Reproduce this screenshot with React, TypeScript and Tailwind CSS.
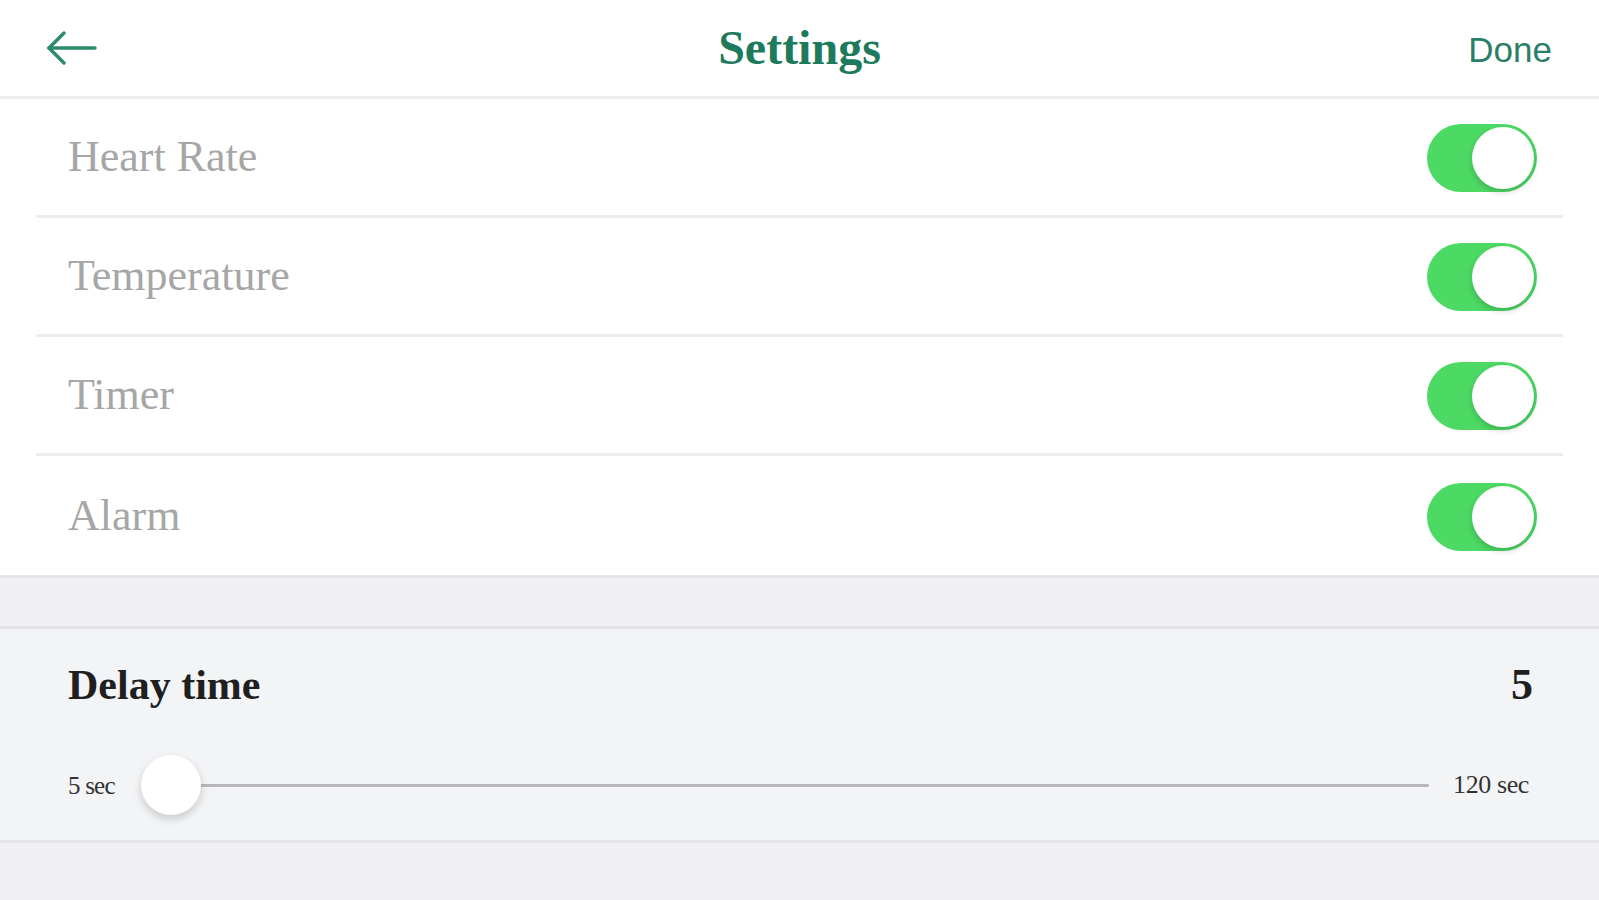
import { useState } from "react"

const serif = { fontFamily: '"Liberation Serif", "DejaVu Serif", serif' }
const sans = { fontFamily: '"Liberation Sans", Arial, sans-serif' }

function Toggle({ on, onChange }: { on: boolean; onChange: () => void }) {
  return (
    <button
      onClick={onChange}
      className={`relative w-[110px] h-[68px] rounded-full transition-colors ${on ? "bg-[#4cd964]" : "bg-[#e5e5ea]"}`}
    >
      <span
        className={`absolute top-[3px] w-[62px] h-[62px] rounded-full bg-white shadow-[0_3px_6px_rgba(0,0,0,0.18)] ${on ? "right-[3px]" : "left-[3px]"}`}
      />
    </button>
  )
}

export default function App() {
  const [settings, setSettings] = useState([
    { label: "Heart Rate", on: true },
    { label: "Temperature", on: true },
    { label: "Timer", on: true },
    { label: "Alarm", on: true },
  ])

  const toggle = (i: number) =>
    setSettings((s) => s.map((x, j) => (j === i ? { ...x, on: !x.on } : x)))

  return (
    <main className="w-full h-[900px] bg-[#efeff4] overflow-hidden">
      <header className="h-[99px] bg-white border-b-[3px] border-[#ededef] grid grid-cols-3 items-center px-[47px]">
        <button className="justify-self-start">
          <svg width="50" height="36" viewBox="0 0 50 36" fill="none" stroke="#2f8a6c" strokeWidth="3.5" strokeLinecap="round" strokeLinejoin="round">
            <path d="M2 18 H48" />
            <path d="M17 3 L2 18 L17 33" />
          </svg>
        </button>
        <h1 className="justify-self-center text-[48px] font-bold text-[#1e7a5c] leading-none" style={serif}>
          Settings
        </h1>
        <button className="justify-self-end text-[35px] text-[#2a7f68] leading-none pt-[2px]" style={sans}>
          Done
        </button>
      </header>

      <section className="bg-white border-b-[3px] border-[#e6e6e9]">
        {settings.map((s, i) => (
          <div key={s.label} className="px-[36px]">
            <div
              className={`h-[119px] flex items-center justify-between pl-[32px] pr-[26px] ${i < settings.length - 1 ? "border-b-[3px] border-[#ececee]" : "h-[116px]"}`}
            >
              <span className="text-[44px] text-[#a6a6a6] leading-none" style={serif}>
                {s.label}
              </span>
              <span className="pt-[8px]">
                <Toggle on={s.on} onChange={() => toggle(i)} />
              </span>
            </div>
          </div>
        ))}
      </section>

      <div className="h-[48px]" />

      <section className="bg-[#f3f4f6] border-y-[3px] border-[#e4e4e8] pl-[68px] pr-[66px] pt-[34px] pb-[25px]">
        <div className="flex items-center justify-between">
          <span className="text-[42px] font-bold text-[#1f1f1f] leading-none" style={serif}>
            Delay time
          </span>
          <span className="text-[44px] font-bold text-[#1f1f1f] leading-none" style={serif}>
            5
          </span>
        </div>
        <div className="flex items-center mt-[48px] h-[60px]">
          <span className="text-[25px] text-[#333] leading-none tracking-[-0.8px]" style={serif}>
            5 sec
          </span>
          <div className="relative flex-1 ml-[26px] mr-[24px] h-[60px] flex items-center">
            <div className="h-[3px] w-full bg-[#b8b8bb] rounded-full" />
            <span className="absolute left-0 top-0 w-[60px] h-[60px] rounded-full bg-white shadow-[0_4px_8px_rgba(0,0,0,0.18)]" />
          </div>
          <span className="text-[26px] text-[#333] leading-none tracking-[-0.4px] pr-[4px]" style={serif}>
            120 sec
          </span>
        </div>
      </section>
    </main>
  )
}
